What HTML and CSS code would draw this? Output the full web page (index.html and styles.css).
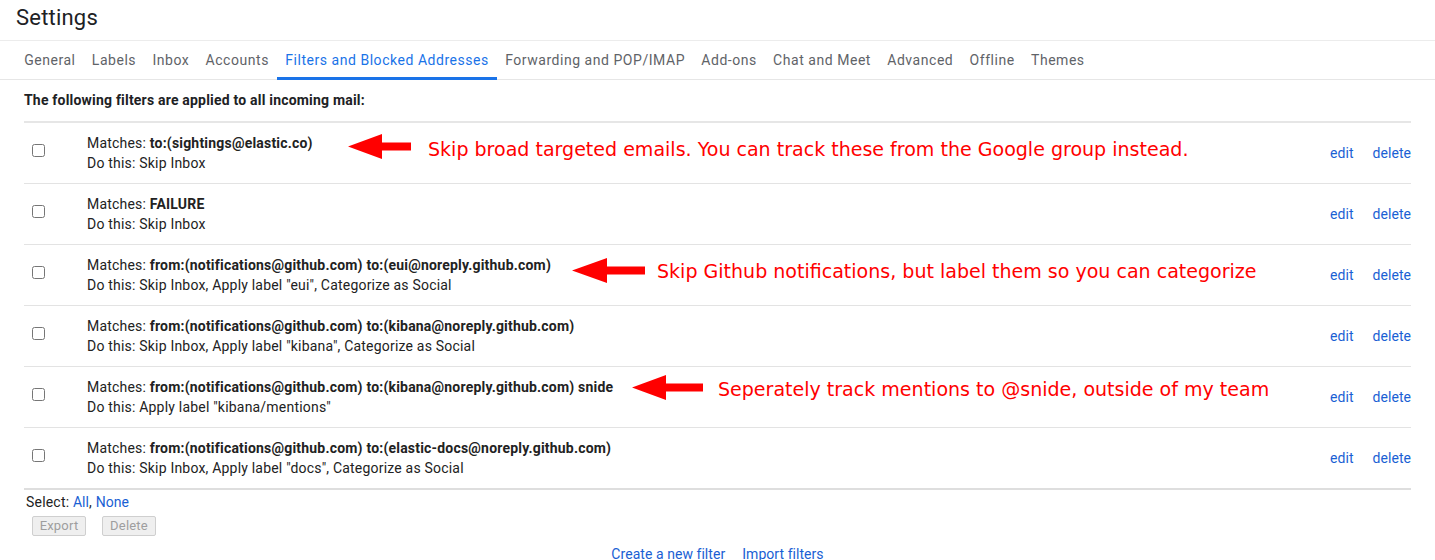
FILE: index.html
```html
<!DOCTYPE html>
<html>
<head>
<meta charset="utf-8">
<link rel="stylesheet" href="styles.css">
</head>
<body>
<header class="page-header">
  <h1 class="title">Settings</h1>
</header>
<nav class="tabs">
  <a class="tab">General</a>
  <a class="tab">Labels</a>
  <a class="tab">Inbox</a>
  <a class="tab">Accounts</a>
  <a class="tab active">Filters and Blocked Addresses</a>
  <a class="tab">Forwarding and POP/IMAP</a>
  <a class="tab">Add-ons</a>
  <a class="tab">Chat and Meet</a>
  <a class="tab">Advanced</a>
  <a class="tab">Offline</a>
  <a class="tab">Themes</a>
</nav>
<main class="content">
  <div class="intro">The following filters are applied to all incoming mail:</div>
  <div class="filters">
    <div class="filter-row">
      <div class="cell-check"><input type="checkbox" class="cb"></div>
      <div class="cell-desc">
        <div>Matches: <b>to:(sightings@elastic.co)</b></div>
        <div>Do this: Skip Inbox</div>
      </div>
      <div class="cell-actions"><a class="link">edit</a><a class="link">delete</a></div>
      <div class="note note-1">
        <svg class="arrow" viewBox="0 0 63 25" width="63" height="25"><path d="M0 12.5 L34 0 L34 8.5 L63 8.5 L63 16.5 L34 16.5 L34 25 Z" fill="#ff0000"/></svg>
        <span class="note-text">Skip broad targeted emails. You can track these from the Google group instead.</span>
      </div>
    </div>
    <div class="filter-row">
      <div class="cell-check"><input type="checkbox" class="cb"></div>
      <div class="cell-desc">
        <div>Matches: <b>FAILURE</b></div>
        <div>Do this: Skip Inbox</div>
      </div>
      <div class="cell-actions"><a class="link">edit</a><a class="link">delete</a></div>
    </div>
    <div class="filter-row">
      <div class="cell-check"><input type="checkbox" class="cb"></div>
      <div class="cell-desc">
        <div>Matches: <b>from:(notifications@github.com) to:(eui@noreply.github.com)</b></div>
        <div>Do this: Skip Inbox, Apply label "eui", Categorize as Social</div>
      </div>
      <div class="cell-actions"><a class="link">edit</a><a class="link">delete</a></div>
      <div class="note note-2">
        <svg class="arrow" viewBox="0 0 73 25" width="73" height="25"><path d="M0 12.5 L35 0 L35 8.5 L73 8.5 L73 16.5 L35 16.5 L35 25 Z" fill="#ff0000"/></svg>
        <span class="note-text">Skip Github notifications, but label them so you can categorize</span>
      </div>
    </div>
    <div class="filter-row">
      <div class="cell-check"><input type="checkbox" class="cb"></div>
      <div class="cell-desc">
        <div>Matches: <b>from:(notifications@github.com) to:(kibana@noreply.github.com)</b></div>
        <div>Do this: Skip Inbox, Apply label "kibana", Categorize as Social</div>
      </div>
      <div class="cell-actions"><a class="link">edit</a><a class="link">delete</a></div>
    </div>
    <div class="filter-row">
      <div class="cell-check"><input type="checkbox" class="cb"></div>
      <div class="cell-desc">
        <div>Matches: <b>from:(notifications@github.com) to:(kibana@noreply.github.com) snide</b></div>
        <div>Do this: Apply label "kibana/mentions"</div>
      </div>
      <div class="cell-actions"><a class="link">edit</a><a class="link">delete</a></div>
      <div class="note note-3">
        <svg class="arrow" viewBox="0 0 71 25" width="71" height="25"><path d="M0 12.5 L34 0 L34 8.5 L71 8.5 L71 16.5 L34 16.5 L34 25 Z" fill="#ff0000"/></svg>
        <span class="note-text">Seperately track mentions to @snide, outside of my team</span>
      </div>
    </div>
    <div class="filter-row last">
      <div class="cell-check"><input type="checkbox" class="cb"></div>
      <div class="cell-desc">
        <div>Matches: <b>from:(notifications@github.com) to:(elastic-docs@noreply.github.com)</b></div>
        <div>Do this: Skip Inbox, Apply label "docs", Categorize as Social</div>
      </div>
      <div class="cell-actions"><a class="link">edit</a><a class="link">delete</a></div>
    </div>
  </div>
  <div class="select-line">Select: <a class="link">All</a>, <a class="link">None</a></div>
  <div class="buttons">
    <button class="btn" disabled>Export</button>
    <button class="btn" disabled>Delete</button>
  </div>
  <div class="bottom-links">
    <a class="link">Create a new filter</a>
    <a class="link">Import filters</a>
  </div>
</main>
</body>
</html>
```

FILE: styles.css
```css
html, body {
  margin: 0;
  padding: 0;
  background: #ffffff;
}
body {
  font-family: Roboto, "Liberation Sans", Arial, sans-serif;
  font-size: 14px;
  letter-spacing: 0.2px;
  color: #222222;
  width: 1435px;
  height: 560px;
  overflow: hidden;
}
.page-header {
  height: 40px;
  padding-left: 16px;
  display: flex;
  align-items: center;
}
.title {
  margin: 0;
  font-family: Roboto, "Open Sans", sans-serif;
  font-weight: 400;
  font-size: 22px;
  letter-spacing: 0.2px;
  color: #202124;
  position: relative;
  top: -3px;
}
.tabs {
  display: flex;
  height: 38px;
  padding-left: 16px;
  border-top: 1px solid #ececec;
  border-bottom: 1px solid #e6e6e6;
}
.tab {
  display: flex;
  align-items: center;
  padding: 0 8.15px;
  color: #5f6368;
  font-size: 14px;
  letter-spacing: 0.54px;
  border-bottom: 3px solid transparent;
  margin-bottom: -1px;
  padding-top: 2px;
}
.tab.active {
  color: #1a73e8;
  border-bottom-color: #1a73e8;
}
.content {
  padding: 0 24px;
}
.intro {
  font-weight: 700;
  color: #202124;
  height: 20px;
  line-height: 20px;
  margin-top: 10px;
  margin-bottom: 11px;
}
.filters {
  border-top: 2px solid #e6e6e6;
}
.filter-row {
  position: relative;
  display: flex;
  align-items: center;
  height: 60px;
  border-bottom: 1px solid #e3e3e3;
}
.filter-row.last {
  border-bottom: 2px solid #dedede;
}
.cell-check {
  width: 63px;
  padding-left: 8px;
  box-sizing: border-box;
  display: flex;
  align-items: center;
}
.cb {
  margin: 0;
  width: 13px;
  height: 13px;
  position: relative;
  top: -3px;
}
.cell-desc {
  flex: 1;
  line-height: 20px;
  padding-bottom: 1px;
}
.cell-desc b {
  color: #222222;
}
.cell-actions {
  display: flex;
  gap: 19px;
}
.link {
  color: #1a5fd4;
  text-decoration: none;
  cursor: pointer;
  letter-spacing: 0.05px;
}
.note {
  position: absolute;
  display: flex;
  align-items: center;
  color: #ff0000;
  font-family: "DejaVu Sans", Verdana, sans-serif;
  font-size: 19.05px;
  letter-spacing: 0;
  white-space: nowrap;
}
.note-text {
  position: relative;
}
.note-1 { left: 324px; top: 11px; gap: 17px; }
.note-1 .note-text { top: 2px; }
.note-2 { left: 548px; top: 13px; gap: 12px; }
.note-3 { left: 608px; top: 8px; gap: 15px; }
.note-3 .note-text { top: 1px; }
.arrow {
  display: block;
}
.select-line {
  height: 20px;
  line-height: 20px;
  padding-left: 2px;
  margin-top: 2px;
  color: #222222;
}
.buttons {
  display: flex;
  gap: 16px;
  padding-left: 8px;
  margin-top: 4px;
}
.btn {
  font-family: Roboto, "Liberation Sans", sans-serif;
  font-size: 13px;
  letter-spacing: 0.2px;
  color: #9e9e9e;
  background: #efefef;
  border: 1px solid #cfcfcf;
  border-radius: 2px;
  width: 54px;
  height: 20px;
  padding: 0;
  line-height: 18px;
}
.bottom-links {
  display: flex;
  justify-content: center;
  gap: 17px;
  margin-top: 8px;
  line-height: 20px;
}
```
